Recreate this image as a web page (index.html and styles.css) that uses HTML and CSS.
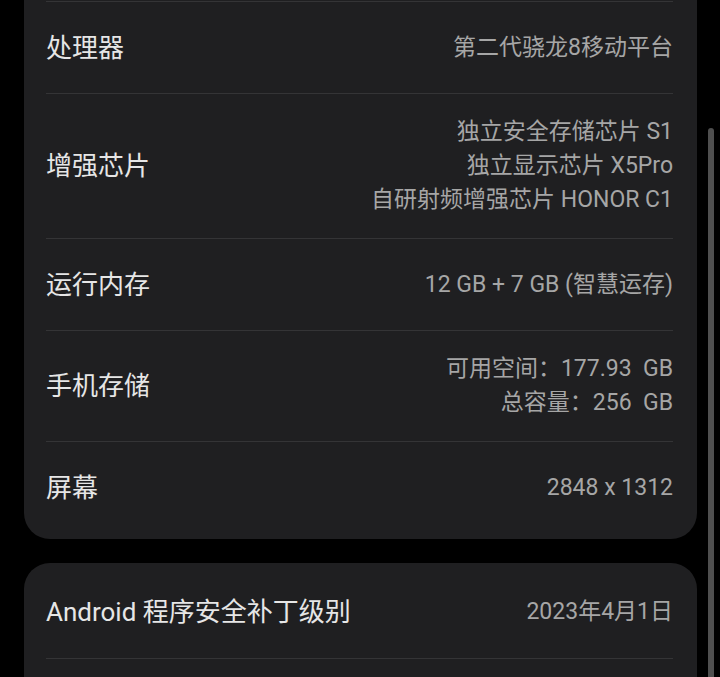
FILE: index.html
```html
<!DOCTYPE html>
<html lang="zh-CN">
<head>
<meta charset="utf-8">
<link rel="stylesheet" href="styles.css">
</head>
<body>
<div class="page">
  <section class="card card-top">
    <div class="row">
      <div class="label">处理器</div>
      <div class="value">第二代骁龙8移动平台</div>
    </div>
    <div class="row">
      <div class="label">增强芯片</div>
      <div class="value">独立安全存储芯片 S1<br>独立显示芯片 X5Pro<br>自研射频增强芯片 HONOR C1</div>
    </div>
    <div class="row">
      <div class="label">运行内存</div>
      <div class="value">12 GB + 7 GB (智慧运存)</div>
    </div>
    <div class="row">
      <div class="label">手机存储</div>
      <div class="value">可用空间：177.93&nbsp;&nbsp;GB<br>总容量：256&nbsp;&nbsp;GB</div>
    </div>
    <div class="row">
      <div class="label">屏幕</div>
      <div class="value">2848 x 1312</div>
    </div>
  </section>
  <section class="card card-bottom">
    <div class="row first">
      <div class="label">Android 程序安全补丁级别</div>
      <div class="value">2023年4月1日</div>
    </div>
    <div class="row">
      <div class="label">&nbsp;</div>
      <div class="value">&nbsp;</div>
    </div>
  </section>
  <div class="scrollbar"></div>
</div>
</body>
</html>
```

FILE: styles.css
```css
html, body {
  margin: 0;
  padding: 0;
  background: #000;
  height: 100%;
  overflow: hidden;
}
body {
  font-family: Roboto, "Noto Sans CJK SC", sans-serif;
}
.page {
  position: relative;
  height: 677px;
  overflow: hidden;
  padding: 0 23px 0 24px;
  display: flex;
  flex-direction: column;
  gap: 24px;
}
.card {
  background: #1f1f21;
  padding: 0 24px 0 22px;
}
.card-top {
  padding-top: 1px;
  padding-bottom: 6px;
  border-radius: 0 0 26px 26px;
}
.card-bottom {
  padding-top: 3px;
  border-radius: 26px 26px 0 0;
  flex: 1;
}
.row {
  display: flex;
  justify-content: space-between;
  align-items: center;
  min-height: 92px;
  padding: 21px 0;
  box-sizing: border-box;
  border-top: 1px solid #343436;
}
.row.first {
  border-top: none;
}
.label {
  font-size: 26px;
  line-height: 34px;
  color: #e6e6e6;
  white-space: nowrap;
}
.value {
  font-size: 23px;
  line-height: 34px;
  color: #a6a6a6;
  text-align: right;
  white-space: nowrap;
}
.scrollbar {
  position: absolute;
  left: 708px;
  top: 128px;
  width: 6px;
  height: 560px;
  border-radius: 3px;
  background: #4f4f4f;
}
```
